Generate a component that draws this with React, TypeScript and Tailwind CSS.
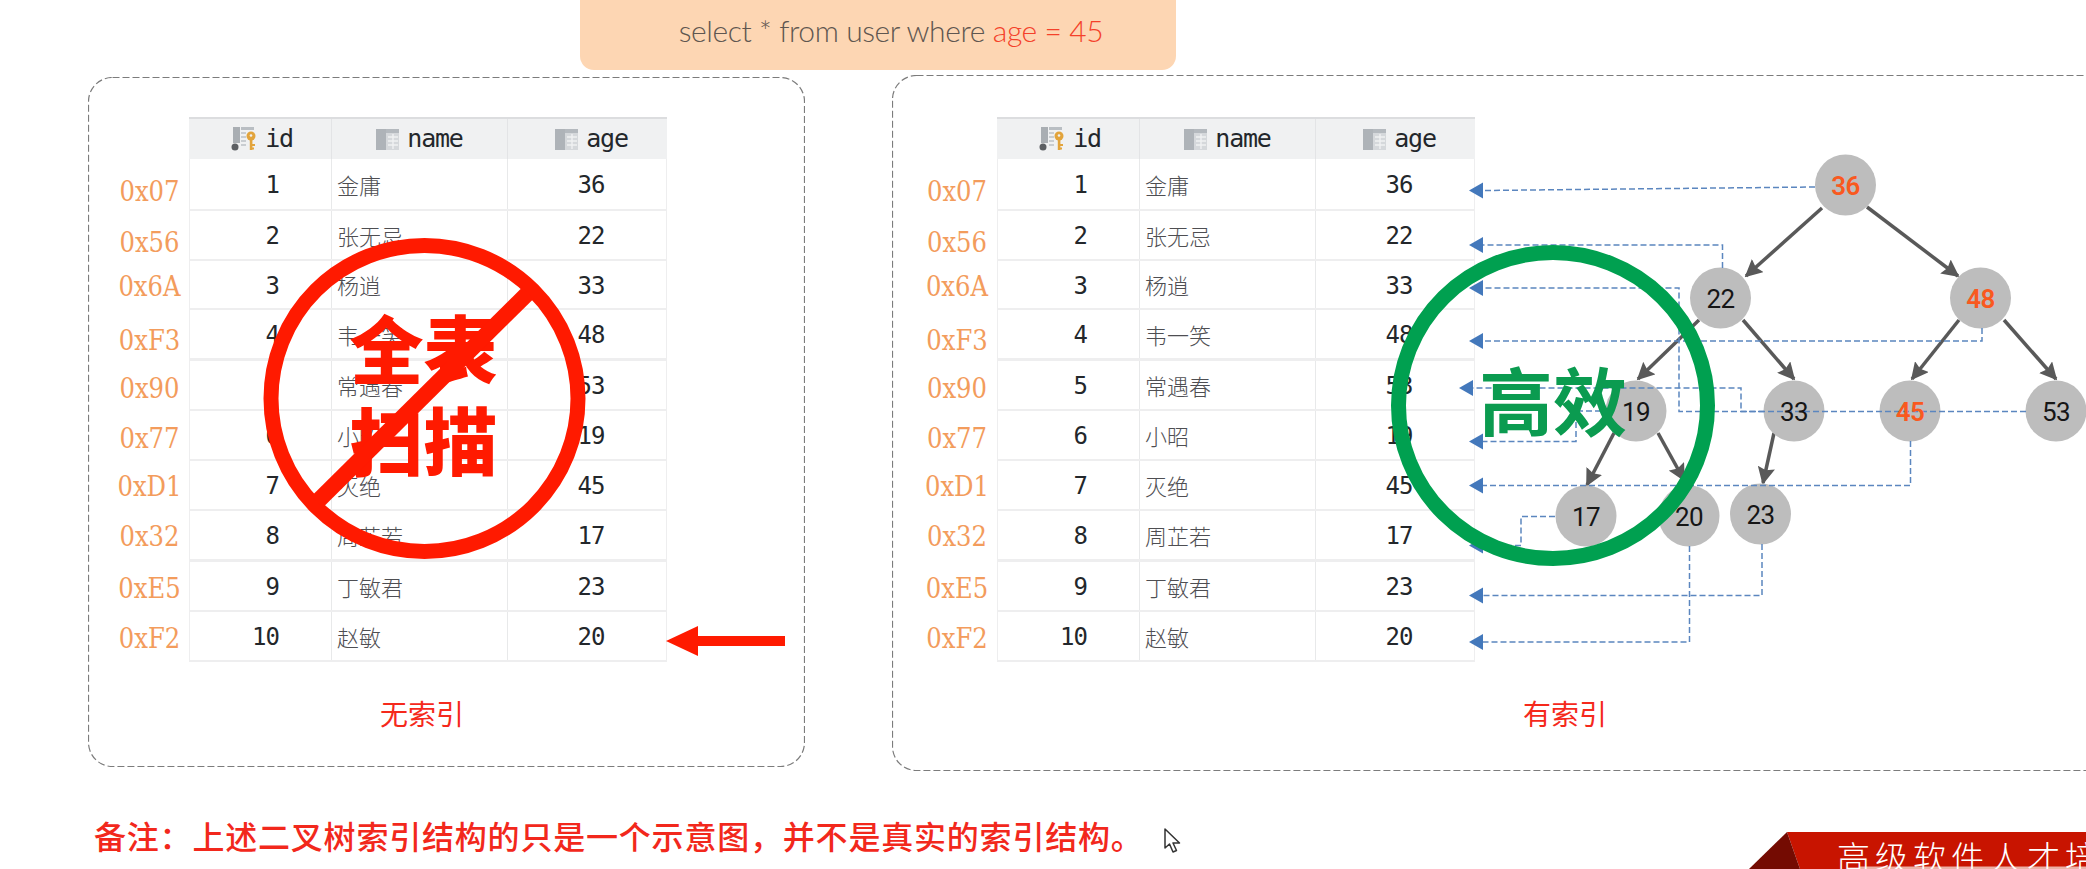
const rows = [
  { id: "1", name: "金庸", age: "36", h: "h-[52px]", border: "border-b-2 border-[#ebecec]" },
  { id: "2", name: "张无忌", age: "22", h: "h-[50px]", border: "border-b-2 border-[#ebecec]" },
  { id: "3", name: "杨逍", age: "33", h: "h-[49px]", border: "border-b-2 border-[#ebecec]" },
  { id: "4", name: "韦一笑", age: "48", h: "h-[51px]", border: "border-b-[3px] border-[#e2e3e4]" },
  { id: "5", name: "常遇春", age: "53", h: "h-[50px]", border: "border-b-2 border-[#ebecec]" },
  { id: "6", name: "小昭", age: "19", h: "h-[50px]", border: "border-b-2 border-[#ebecec]" },
  { id: "7", name: "灭绝", age: "45", h: "h-[50px]", border: "border-b-2 border-[#ebecec]" },
  { id: "8", name: "周芷若", age: "17", h: "h-[51px]", border: "border-b-[3px] border-[#e2e3e4]" },
  { id: "9", name: "丁敏君", age: "23", h: "h-[50px]", border: "border-b-2 border-[#ebecec]" },
  { id: "10", name: "赵敏", age: "20", h: "h-[50px]", border: "border-b-2 border-[#ebecec]" },
];

const hexLabels = [
  { text: "0x07", mt: "mt-[55px]" },
  { text: "0x56", mt: "mt-[11px]" },
  { text: "0x6A", mt: "mt-[4px]" },
  { text: "0xF3", mt: "mt-[14px]" },
  { text: "0x90", mt: "mt-[8px]" },
  { text: "0x77", mt: "mt-[10px]" },
  { text: "0xD1", mt: "mt-[8px]" },
  { text: "0x32", mt: "mt-[10px]" },
  { text: "0xE5", mt: "mt-[12px]" },
  { text: "0xF2", mt: "mt-[10px]" },
];

const nodes = [
  { x: 1845.5, y: 185, label: "36", hot: true },
  { x: 1720.5, y: 298, label: "22" },
  { x: 1980.5, y: 298, label: "48", hot: true },
  { x: 1636, y: 411, label: "19" },
  { x: 1794, y: 411, label: "33" },
  { x: 1910, y: 411, label: "45", hot: true },
  { x: 2056, y: 411, label: "53" },
  { x: 1586, y: 516, label: "17" },
  { x: 1689, y: 516, label: "20" },
  { x: 1760.5, y: 514, label: "23" },
];

const edges = [
  [1822, 208, 1746, 276],
  [1867, 207, 1958, 276],
  [1699, 320, 1638, 379],
  [1743, 320, 1794, 379],
  [1959, 320, 1912, 379],
  [2004, 320, 2056, 379],
  [1614, 433, 1587, 485],
  [1658, 433, 1684, 480],
  [1774, 433, 1763, 483],
];

const links = [
  { d: "M1815 187 L1483 190.5", tip: [1469, 190.5] },
  { d: "M1722.5 268 V245 H1483", tip: [1469, 245] },
  { d: "M1764 411.5 H1679 V288 H1483", tip: [1469, 288] },
  { d: "M1982 328 V341 H1483", tip: [1469, 341] },
  { d: "M2026 411.5 H1741 V388 H1473", tip: [1459, 388] },
  { d: "M1610 411 H1576 V441.5 H1483", tip: [1469, 441.5] },
  { d: "M1910.5 441 V485.5 H1483", tip: [1469, 485.5] },
  { d: "M1555 516.5 H1521 V545.5 H1483", tip: [1469, 545.5] },
  { d: "M1762 544 V595.5 H1483", tip: [1469, 595.5] },
  { d: "M1689.5 546 V642 H1483", tip: [1469, 642] },
];

// full width colon and comma, written as escapes so they stay full width
const note = "备注\uFF1A上述二叉树索引结构的只是一个示意图\uFF0C并不是真实的索引结构。";

const KeyColumnIcon = () => (
  <svg width="26" height="24" viewBox="0 0 26 24" className="shrink-0">
    <rect x="2" y="0" width="7" height="16" fill="#a9aeb3" />
    <circle cx="4" cy="20" r="3.5" fill="#5c5f63" />
    <rect x="10" y="0" width="13" height="3" fill="#b9bec3" />
    <rect x="10" y="5" width="5" height="2" fill="#c9cdd1" />
    <rect x="10" y="9" width="5" height="2" fill="#c9cdd1" />
    <rect x="10" y="13" width="5" height="2" fill="#c9cdd1" />
    <rect x="10" y="17" width="5" height="2" fill="#c9cdd1" />
    <circle cx="20" cy="9" r="4.5" fill="#e2a43c" />
    <circle cx="20" cy="8.5" r="1.3" fill="#f0f1f2" />
    <path d="M18.8 12 h2.6 v11 h-2.6 z M21 17 h3 v2 h-3 z M21 20.5 h2 v2 h-2 z" fill="#e2a43c" />
  </svg>
);

const ColumnIcon = () => (
  <svg width="23" height="21" viewBox="0 0 23 21" className="shrink-0">
    <rect x="0" y="0" width="23" height="21" fill="#d5d8db" />
    <rect x="0" y="0" width="10" height="21" fill="#aeb3b8" />
    <rect x="10" y="0" width="13" height="4" fill="#b4b9be" />
    <path d="M12 8 H22 M12 12 H22 M12 16 H22 M17 5 V20" stroke="#f0f1f2" strokeWidth="1.4" />
  </svg>
);

const DataTable = () => (
  <div className="w-[478px] shrink-0">
    <div className="flex h-[42px] border-t-2 border-[#dcdddf] bg-[#f0f1f2] font-['DejaVu_Sans_Mono',monospace] text-[25px] tracking-[-1.2px] text-[#23272b]">
      <div className="flex w-[143px] items-center justify-center gap-2 border-r border-[#e3e4e6] pl-1">
        <KeyColumnIcon />
        <span>id</span>
      </div>
      <div className="flex w-[176px] items-center justify-center gap-2 border-r border-[#e3e4e6]">
        <ColumnIcon />
        <span>name</span>
      </div>
      <div className="flex flex-1 items-center justify-center gap-2 pl-2">
        <ColumnIcon />
        <span>age</span>
      </div>
    </div>
    {rows.map((row) => (
      <div
        key={row.id}
        className={`flex border-x border-[#eeeeef] bg-white ${row.h} ${row.border}`}
      >
        <div className="flex w-[142px] items-center justify-end border-r border-[#e8e9ea] pr-[52px] pt-[2px] font-['DejaVu_Sans_Mono',monospace] text-[24px] tracking-[-1px] text-[#23272b]">
          {row.id}
        </div>
        <div className="flex w-[176px] items-center border-r border-[#e8e9ea] pl-[5px] font-['Noto_Sans_CJK_SC',sans-serif] text-[22px] font-light text-[#4e4e52]">
          {row.name}
        </div>
        <div className="flex flex-1 items-center justify-center pl-2 pt-[2px] font-['DejaVu_Sans_Mono',monospace] text-[24px] tracking-[-1px] text-[#23272b]">
          {row.age}
        </div>
      </div>
    ))}
  </div>
);

const HexColumn = ({ className }: { className: string }) => (
  <div className={`shrink-0 font-['DejaVu_Serif',serif] text-[27px] leading-[40px] text-[#f39c5c] text-center [font-stretch:condensed] ${className}`}>
    {hexLabels.map((hex) => (
      <div key={hex.text} className={`h-[40px] ${hex.mt}`}>
        {hex.text}
      </div>
    ))}
  </div>
);

const Caption = ({ text, className }: { text: string; className: string }) => (
  <div className={`font-['Noto_Sans_CJK_SC',sans-serif] text-[28px] leading-[40px] text-[#f5291c] ${className}`}>
    {text}
  </div>
);

// dashed outline with the long dashes of the slide, css dashed is too fine for it
const DashedFrame = ({ width, height }: { width: number; height: number }) => (
  <svg width={width} height={height} className="absolute left-0 top-0">
    <rect
      x="0.5"
      y="0.5"
      width={width - 1}
      height={height - 1}
      rx="24"
      fill="none"
      stroke="#7c7c7c"
      strokeWidth="1.2"
      strokeDasharray="7 3"
    />
  </svg>
);

const RedStamp = () => (
  <div className="absolute left-[263px] top-[238px] h-[321px] w-[323px]">
    <div className="flex h-full flex-col items-center pt-[62px] pr-[2px] font-['Noto_Sans_CJK_SC',sans-serif] text-[74px] font-black leading-[92px] text-[#ff1a00]">
      <span>全表</span>
      <span>扫描</span>
    </div>
    <svg viewBox="263 238 323 321" className="absolute inset-0 h-full w-full">
      <ellipse cx="424.5" cy="398.5" rx="153.5" ry="153" fill="none" stroke="#ff1a00" strokeWidth="15" />
      <path d="M528 293 L317 502" stroke="#ff1a00" strokeWidth="16" />
    </svg>
  </div>
);

const GreenStamp = () => (
  <div className="absolute left-[1391px] top-[245px] flex h-[321px] w-[324px] items-center justify-center">
    <svg viewBox="0 0 324 321" className="absolute inset-0 h-full w-full">
      <ellipse cx="162" cy="160.5" rx="154.5" ry="153" fill="none" stroke="#00a050" strokeWidth="15" />
    </svg>
    <span className="relative mb-[15px] font-['Noto_Sans_CJK_SC',sans-serif] text-[74px] font-bold leading-none text-[#0b9b50]">
      高效
    </span>
  </div>
);

const BtreeDiagram = () => (
  <svg
    viewBox="1450 150 636 510"
    className="absolute left-[1450px] top-[150px] h-[510px] w-[636px]"
  >
    <defs>
      <marker id="tree-arrow" viewBox="0 0 10 10" refX="9" refY="5" markerWidth="5" markerHeight="5" orient="auto">
        <path d="M0 0 L10 5 L0 10 L1.5 5 Z" fill="#595959" />
      </marker>
    </defs>
    {edges.map(([x1, y1, x2, y2]) => (
      <line
        key={`${x1}-${y1}`}
        x1={x1}
        y1={y1}
        x2={x2}
        y2={y2}
        stroke="#595959"
        strokeWidth="3.5"
        markerEnd="url(#tree-arrow)"
      />
    ))}
    {nodes.map((node) => (
      <ellipse key={node.label} cx={node.x} cy={node.y} rx="30.5" ry="30.5" fill="#bdbdbd" />
    ))}
    {links.map((link) => (
      <g key={link.d}>
        <path d={link.d} fill="none" stroke="#5b86bf" strokeWidth="1.5" strokeDasharray="6 3" />
        <path
          d={`M${link.tip[0]} ${link.tip[1]} L${link.tip[0] + 14} ${link.tip[1] - 8} V${link.tip[1] + 8} Z`}
          fill="#4378bb"
        />
      </g>
    ))}
    {nodes.map((node) => (
      <text
        key={node.label}
        x={node.x}
        y={node.y + 9.5}
        textAnchor="middle"
        className={`font-['Roboto',sans-serif] text-[26px] tracking-[-0.5px] ${node.hot ? "fill-[#f9591f] font-semibold" : "fill-[#161616]"}`}
      >
        {node.label}
      </text>
    ))}
  </svg>
);

const Cursor = () => (
  <svg width="20" height="28" viewBox="0 0 20 28" className="ml-[19px] mt-[57px] shrink-0">
    <path
      d="M2 1 V20 L6.5 16 L10 24 L13.5 22.5 L10 15 L16.5 15 Z"
      fill="#fff"
      stroke="#333"
      strokeWidth="1.5"
      strokeLinejoin="round"
    />
  </svg>
);

const Banner = () => (
  <div className="relative ml-auto mt-[61px] h-[37px] w-[337px] overflow-hidden">
    <svg viewBox="0 0 337 37" className="absolute inset-0 h-full w-full">
      <path d="M38 0 H337 V37 H51 Z" fill="#c81400" />
      <path d="M0 37 L38 0 L51 37 Z" fill="#740b02" />
      <rect x="111" y="34.5" width="226" height="2.5" fill="#ecb0a6" />
    </svg>
    <div className="relative whitespace-nowrap pl-[88px] pt-[4px] font-['Noto_Sans_CJK_SC',sans-serif] text-[33px] font-light leading-[40px] tracking-[5px] text-white">
      高级软件人才培
    </div>
  </div>
);

export default function App() {
  return (
    <div className="relative h-[869px] w-[2086px] overflow-hidden bg-white font-['Liberation_Sans','Noto_Sans_CJK_SC',sans-serif]">
      <div className="ml-[580px] flex h-[70px] w-[596px] items-center justify-center rounded-b-[14px] bg-[#fdd6b3] pb-[9px] pl-[26px] font-['Lato',sans-serif] text-[30px] font-light tracking-[-0.4px] text-[#5f5650]">
        <span>
          select * from user where <span className="text-[#f4412a]">age = 45</span>
        </span>
      </div>

      <div className="mt-[5px] flex items-start">
        <div className="relative ml-[88px] mt-[2px] h-[690px] w-[717px] shrink-0 pt-[40px]">
          <DashedFrame width={717} height={690} />
          <div className="flex">
            <HexColumn className="ml-[22px] w-[79px]" />
            <DataTable />
          </div>
          <Caption text="无索引" className="ml-[292px] mt-[31px]" />
        </div>

        <div className="relative ml-[87px] h-[696px] w-[1220px] shrink-0 pt-[42px]">
          <DashedFrame width={1220} height={696} />
          <div className="flex">
            <HexColumn className="ml-[25px] w-[80px]" />
            <DataTable />
          </div>
          <Caption text="有索引" className="ml-[631px] mt-[31px]" />
        </div>
      </div>

      <div className="flex h-[98px] items-start">
        <div className="ml-[94px] mt-[44px] whitespace-nowrap font-['Noto_Sans_CJK_SC',sans-serif] text-[32px] font-medium leading-[40px] tracking-[0.8px] text-[#f2281c]">
          {note}
        </div>
        <Cursor />
        <Banner />
      </div>

      <div className="absolute left-[666px] top-[625px]">
        <svg width="120" height="32" viewBox="0 0 120 32">
          <path d="M0 16 L32 1 V11 H119 V21 H32 V31 Z" fill="#ff1a00" />
        </svg>
      </div>

      <RedStamp />
      <BtreeDiagram />
      <GreenStamp />
    </div>
  );
}
